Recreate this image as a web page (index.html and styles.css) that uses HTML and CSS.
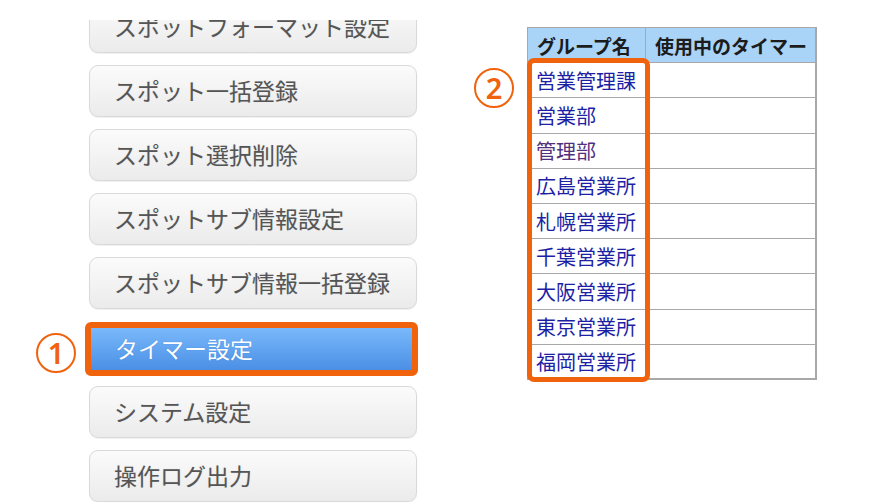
FILE: index.html
```html
<!DOCTYPE html>
<html lang="ja">
<head>
<meta charset="utf-8">
<link rel="stylesheet" href="styles.css">
</head>
<body>
<div class="page">
  <div class="menu-clip">
    <div class="menu">
      <div class="btn">スポットフォーマット設定</div>
      <div class="btn">スポット一括登録</div>
      <div class="btn">スポット選択削除</div>
      <div class="btn">スポットサブ情報設定</div>
      <div class="btn">スポットサブ情報一括登録</div>
      <div class="btn-active">
        <span class="mark mark-1">1</span>
        <div class="btn-blue">タイマー設定</div>
      </div>
      <div class="btn">システム設定</div>
      <div class="btn">操作ログ出力</div>
    </div>
  </div>
  <div class="table-area">
    <table class="groups">
      <thead>
        <tr><th class="c1">グループ名</th><th class="c2">使用中のタイマー</th></tr>
      </thead>
      <tbody>
        <tr><td class="link">営業管理課</td><td></td></tr>
        <tr><td class="link">営業部</td><td></td></tr>
        <tr><td class="link visited">管理部</td><td></td></tr>
        <tr><td class="link">広島営業所</td><td></td></tr>
        <tr><td class="link">札幌営業所</td><td></td></tr>
        <tr><td class="link">千葉営業所</td><td></td></tr>
        <tr><td class="link">大阪営業所</td><td></td></tr>
        <tr><td class="link">東京営業所</td><td></td></tr>
        <tr><td class="link">福岡営業所</td><td></td></tr>
      </tbody>
    </table>
    <div class="col-highlight"></div>
    <span class="mark mark-2">2</span>
  </div>
</div>
</body>
</html>
```

FILE: styles.css
```css
html, body {
  margin: 0;
  padding: 0;
  background: #ffffff;
}

.page {
  display: flex;
  width: 896px;
  height: 502px;
  overflow: hidden;
  font-family: "Noto Sans CJK JP", "Noto Sans", sans-serif;
}

.menu-clip {
  width: 430px;
  margin-top: 20px;
  height: 482px;
  overflow: hidden;
  flex: none;
}

.menu {
  margin-top: -19px;
  padding-left: 89px;
  display: flex;
  flex-direction: column;
  gap: 12px;
}

.btn {
  box-sizing: border-box;
  width: 328px;
  height: 52px;
  border: 1px solid #d9d9d9;
  border-radius: 9px;
  background: linear-gradient(#fbfbfb, #ebebeb);
  box-shadow: 0 1px 1px rgba(0,0,0,0.06);
  padding-left: 24px;
  font-size: 23px;
  line-height: 49px;
  color: #555555;
  white-space: nowrap;
  text-shadow: 0 0 1px rgba(120,120,120,0.25);
}

.btn-active {
  position: relative;
  margin-left: -4px;
  margin-top: 1px;
  margin-bottom: -2px;
  width: 333px;
  height: 54px;
  box-sizing: border-box;
  border: 6px solid #f0620c;
  border-radius: 6px;
}

.btn-blue {
  height: 100%;
  background: linear-gradient(#79b9fb, #4b8fe6);
  color: #ffffff;
  font-size: 23px;
  line-height: 40px;
  padding-left: 24px;
  white-space: nowrap;
  text-shadow: 0 0 1px rgba(40,90,170,0.5);
}

.mark {
  position: absolute;
  box-sizing: border-box;
  width: 40px;
  height: 40px;
  border: 2px solid #f0620c;
  border-radius: 50%;
  color: #f0620c;
  font-family: "Noto Sans", "Liberation Sans", sans-serif;
  font-weight: 600;
  font-size: 29px;
  line-height: 35px;
  text-align: center;
}

.mark-1 {
  left: -55px;
  top: 5px;
}

.table-area {
  position: relative;
  margin-left: 97px;
  margin-top: 27px;
  align-self: flex-start;
}

.groups {
  border-collapse: collapse;
  width: 290px;
  border-right: 2px solid #a8a8a8;
  border-bottom: 2px solid #a8a8a8;
}

.groups th,
.groups td {
  border: 1px solid #a8a8a8;
  height: 35.2px;
  padding: 0 0 0 8px;
  text-align: left;
  white-space: nowrap;
  box-sizing: border-box;
}

.groups th {
  background: #a9d3f7;
  font-size: 19px;
  font-weight: 700;
  color: #1c1c1c;
  padding-left: 9px;
}

.groups td {
  font-size: 20px;
  background: #ffffff;
}

.c1 {
  width: 118px;
}

.link {
  color: #1d1fa5;
}

.visited {
  color: #52307e;
}

.col-highlight {
  position: absolute;
  left: 0;
  top: 31px;
  width: 123px;
  height: 324px;
  box-sizing: border-box;
  border: 5px solid #f0620c;
  border-radius: 7px;
}

.mark-2 {
  left: -53px;
  top: 41px;
}
```
